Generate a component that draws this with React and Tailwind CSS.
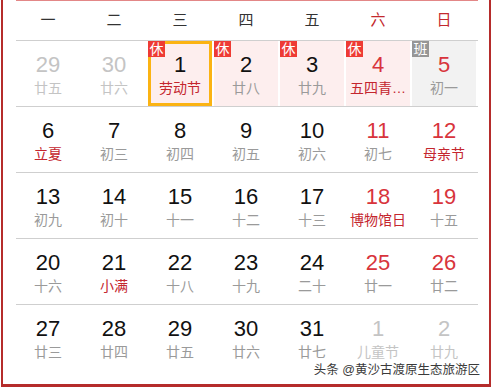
import React from "react";

const rows = [
  [
    { d: 29, l: "廿五", o: true },
    { d: 30, l: "廿六", o: true },
    { d: 1, l: "劳动节", fest: true, badge: "休", bg: "pink", sel: true },
    { d: 2, l: "廿八", badge: "休", bg: "pink" },
    { d: 3, l: "廿九", badge: "休", bg: "pink" },
    { d: 4, l: "五四青…", fest: true, red: true, badge: "休", bg: "pink" },
    { d: 5, l: "初一", red: true, badge: "班", bg: "gray" },
  ],
  [
    { d: 6, l: "立夏", fest: true },
    { d: 7, l: "初三" },
    { d: 8, l: "初四" },
    { d: 9, l: "初五" },
    { d: 10, l: "初六" },
    { d: 11, l: "初七", red: true },
    { d: 12, l: "母亲节", red: true, fest: true },
  ],
  [
    { d: 13, l: "初九" },
    { d: 14, l: "初十" },
    { d: 15, l: "十一" },
    { d: 16, l: "十二" },
    { d: 17, l: "十三" },
    { d: 18, l: "博物馆日", red: true, fest: true },
    { d: 19, l: "十五", red: true },
  ],
  [
    { d: 20, l: "十六" },
    { d: 21, l: "小满", fest: true },
    { d: 22, l: "十八" },
    { d: 23, l: "十九" },
    { d: 24, l: "二十" },
    { d: 25, l: "廿一", red: true },
    { d: 26, l: "廿二", red: true },
  ],
  [
    { d: 27, l: "廿三" },
    { d: 28, l: "廿四" },
    { d: 29, l: "廿五" },
    { d: 30, l: "廿六" },
    { d: 31, l: "廿七" },
    { d: 1, l: "儿童节", o: true },
    { d: 2, l: "廿九", o: true },
  ],
];

const week = ["一", "二", "三", "四", "五", "六", "日"];

function Cell({ c }) {
  const bg =
    c.bg === "pink" ? "bg-[#fdeeee]" : c.bg === "gray" ? "bg-[#f2f2f2]" : "";
  const numColor = c.o
    ? "text-[#c4c4c4]"
    : c.red
    ? "text-[#d8343c]"
    : "text-[#111111]";
  const lunColor = c.o
    ? "text-[#c4c4c4]"
    : c.fest
    ? "text-[#c4262e]"
    : "text-[#9a9a9a]";
  return (
    <div className="w-[66px] h-[65px] pr-[2px]">
      <div
        className={`relative w-[64px] h-[65px] flex flex-col items-center ${bg} ${
          c.sel ? "border-[3px] border-[#fbb313]" : ""
        }`}
      >
        {c.badge && (
          <div
            className={`absolute ${c.sel ? "-left-[3px] -top-[3px]" : "left-0 top-0"} w-[17px] h-[16px] flex items-center justify-center text-white text-[14px] leading-[16px] ${
              c.badge === "班" ? "bg-[#969696]" : "bg-[#ee3b34]"
            }`}
          >
            {c.badge}
          </div>
        )}
        <div
          className={`${c.sel ? "pt-[9px]" : "pt-[12px]"} text-[22px] leading-[24px] ${numColor} font-['Liberation_Sans',sans-serif]`}
        >
          {c.d}
        </div>
        <div className={`mt-[2px] text-[14px] leading-[18px] whitespace-nowrap ${lunColor}`}>
          {c.l}
        </div>
      </div>
    </div>
  );
}

export default function App() {
  return (
    <div className="relative w-[492px] h-[387px] bg-white overflow-hidden font-['Liberation_Sans','Noto_Sans_CJK_SC',sans-serif]">
      <div className="ml-[1px] w-[490px] h-[387px] border-l-2 border-r-2 border-b-[3px] border-[#b52c2b] bg-white">
        <div className="pl-[13px]">
          <div className="w-[462px] h-[1px] bg-[#e38787]" />
          <div className="w-[462px] h-[40px] flex items-center border-b border-[#cfcfcf]">
            {week.map((w, i) => (
              <div
                key={i}
                className={`w-[66px] pr-[2px] text-center text-[15px] ${
                  i >= 5 ? "text-[#c3292e]" : "text-[#333333]"
                }`}
              >
                {w}
              </div>
            ))}
          </div>
          {rows.map((r, ri) => (
            <div
              key={ri}
              className={`w-[462px] flex ${ri < 4 ? "border-b border-[#cfcfcf]" : ""}`}
            >
              {r.map((c, ci) => (
                <Cell key={ci} c={c} />
              ))}
            </div>
          ))}
        </div>
      </div>
      <div className="absolute right-[12px] top-[361px] text-[12.5px] leading-[18px] text-[#3a3a3a] [text-shadow:0_0_2px_#fff,0_0_2px_#fff]">
        头条 @黄沙古渡原生态旅游区
      </div>
    </div>
  );
}
